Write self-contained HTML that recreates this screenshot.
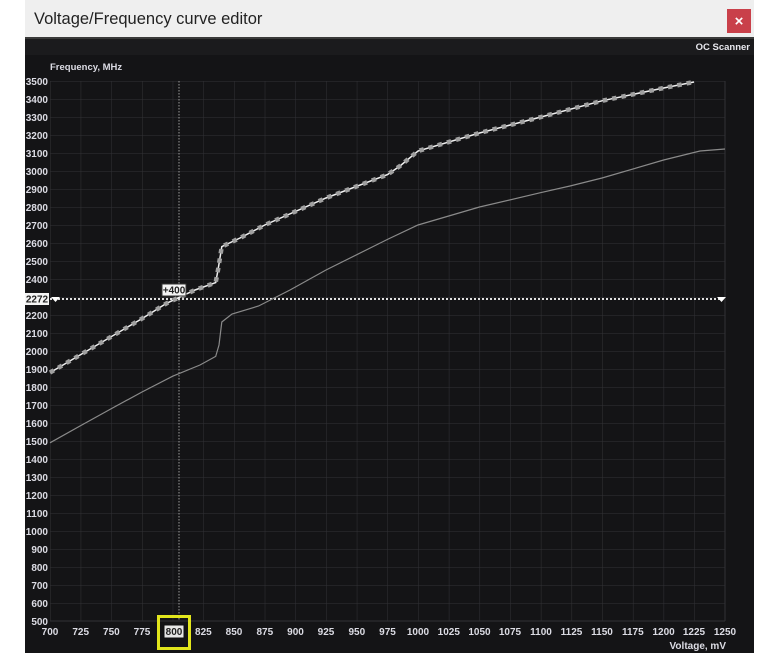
<!DOCTYPE html>
<html><head><meta charset="utf-8"><style>
html,body{margin:0;padding:0;background:#fff;width:780px;height:653px;overflow:hidden}
svg{display:block}
text{font-family:"Liberation Sans",sans-serif;font-weight:bold;font-size:10px;fill:#dcdce4}
</style></head><body>
<svg width="780" height="653" viewBox="0 0 780 653">
<defs>
<pattern id="g" x="50" y="81" width="30.68" height="18" patternUnits="userSpaceOnUse">
<path d="M0 0V18M0 0H30.68" stroke="#323236" stroke-width="1" fill="none"/>
</pattern>
</defs>
<rect x="25" y="0" width="729" height="653" fill="#1b1b1d"/>
<rect x="25" y="0" width="729" height="37" fill="#efefef"/>
<rect x="25" y="37" width="729" height="2" fill="#3a3a3a"/>
<text x="34" y="24" style="font-weight:normal;font-size:16.5px;fill:#222">Voltage/Frequency curve editor</text>
<rect x="727" y="9" width="24" height="24" fill="#c9404a"/>
<text x="739" y="26" text-anchor="middle" style="font-size:15px;fill:#fff">×</text>
<rect x="25" y="55" width="729" height="598" fill="#141416"/>
<text x="750" y="50" text-anchor="end" style="fill:#e8e8ee;font-size:9.5px">OC Scanner</text>
<text x="50" y="70" style="font-size:9.5px">Frequency, MHz</text>
<rect x="50" y="81" width="675" height="540" fill="url(#g)"/>
<path d="M725 81V621M50 621H725" stroke="#323236"/>
<line x1="179" y1="81" x2="179" y2="621" stroke="#9a9a9a" stroke-dasharray="1.5 1.5"/>
<line x1="50" y1="299" x2="722" y2="299" stroke="#e0e0e0" stroke-width="2" stroke-dasharray="2 2"/>
<path d="M51 297h9l-4.5 5z M717 297h9l-4.5 5z" fill="#fff"/>
<polyline fill="none" stroke="#8a8a8a" stroke-width="1.2" points="50,442.8 80,426 111.4,408.6 142,392 172.7,376.2 200,365 215.7,356.4 219,345 221.8,322 232,314 258.6,306 290,290 326,270 387.5,239.4 418,225 479.5,207 541,192.6 570,186 602,178 663.6,160 700,151 725,149"/>
<polyline fill="none" stroke="#f0f0f0" stroke-width="1.5" points="50,372.6 142,318.6 166.6,303.3 195,290 215.7,282.6 218,270 221.8,246.6 240,238 264.8,225 326,198 387.5,174.6 400,166 418,151 479.5,133 541,117 602,100.8 663.6,88 694,82"/>
<polyline fill="none" stroke="#a0a0a0" stroke-width="4.5" stroke-dasharray="4.5 5" points="50,372.6 142,318.6 166.6,303.3 195,290 215.7,282.6 218,270 221.8,246.6 240,238 264.8,225 326,198 387.5,174.6 400,166 418,151 479.5,133 541,117 602,100.8 663.6,88 694,82"/>
<rect x="162" y="284" width="24" height="12" fill="#f4f4f4" stroke="#333"/>
<text x="174" y="293.5" text-anchor="middle" style="fill:#222">+400</text>
<rect x="25" y="293" width="24" height="12" fill="#f4f4f4"/>
<text x="37" y="302.5" text-anchor="middle" style="fill:#222">2272</text>
<g text-anchor="end">
<text x="48" y="85">3500</text><text x="48" y="103">3400</text><text x="48" y="121">3300</text><text x="48" y="139">3200</text><text x="48" y="157">3100</text><text x="48" y="175">3000</text><text x="48" y="193">2900</text><text x="48" y="211">2800</text><text x="48" y="229">2700</text><text x="48" y="247">2600</text><text x="48" y="265">2500</text><text x="48" y="283">2400</text><text x="48" y="319">2200</text><text x="48" y="337">2100</text><text x="48" y="355">2000</text><text x="48" y="373">1900</text><text x="48" y="391">1800</text><text x="48" y="409">1700</text><text x="48" y="427">1600</text><text x="48" y="445">1500</text><text x="48" y="463">1400</text><text x="48" y="481">1300</text><text x="48" y="499">1200</text><text x="48" y="517">1100</text><text x="48" y="535">1000</text><text x="48" y="553">900</text><text x="48" y="571">800</text><text x="48" y="589">700</text><text x="48" y="607">600</text><text x="48" y="625">500</text>
</g>
<g text-anchor="middle">
<text x="50" y="635">700</text><text x="80.7" y="635">725</text><text x="111.4" y="635">750</text><text x="142" y="635">775</text><text x="203.4" y="635">825</text><text x="234" y="635">850</text><text x="264.8" y="635">875</text><text x="295.5" y="635">900</text><text x="326" y="635">925</text><text x="356.8" y="635">950</text><text x="387.5" y="635">975</text><text x="418" y="635">1000</text><text x="448.8" y="635">1025</text><text x="479.5" y="635">1050</text><text x="510" y="635">1075</text><text x="541" y="635">1100</text><text x="571.5" y="635">1125</text><text x="602" y="635">1150</text><text x="632.8" y="635">1175</text><text x="663.6" y="635">1200</text><text x="694" y="635">1225</text><text x="725" y="635">1250</text>
</g>
<rect x="158.5" y="616.5" width="31" height="32" fill="none" stroke="#e2e61c" stroke-width="3"/>
<rect x="164" y="625" width="20" height="13" fill="#e6e6e6" stroke="#111"/>
<text x="174" y="635" text-anchor="middle" style="fill:#222">800</text>
<text x="726" y="649" text-anchor="end">Voltage, mV</text>
</svg>
</body></html>
